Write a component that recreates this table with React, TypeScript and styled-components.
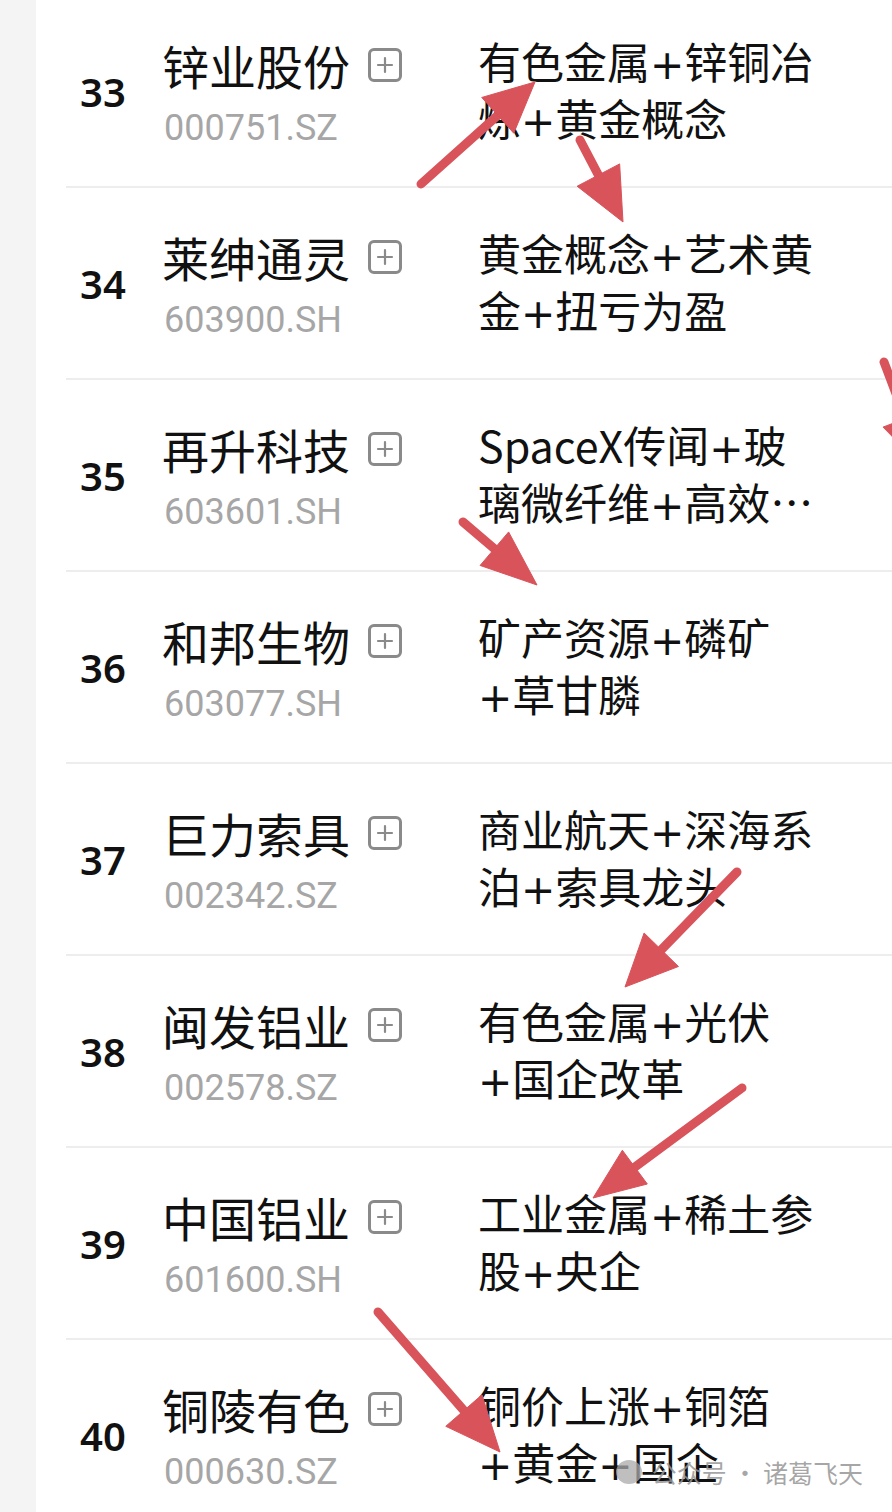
import styled, { createGlobalStyle } from "styled-components";

const GlobalStyle = createGlobalStyle`
  html, body {
    margin: 0;
    padding: 0;
    background: #ffffff;
    overflow: hidden;
  }
`;

const Page = styled.div`
  position: relative;
  display: flex;
  height: 100vh;
  overflow: hidden;
  background: #ffffff;
`;

const Rail = styled.div`
  width: 36px;
  flex-shrink: 0;
  background: #f4f4f4;
`;

const List = styled.div`
  flex: 1;
  margin-top: -4px;
  padding-left: 30px;
`;

const Row = styled.div`
  display: flex;
  height: 190px;
  border-bottom: 2px solid #ededed;
`;

const Rank = styled.div`
  width: 98px;
  padding-left: 14px;
  box-sizing: border-box;
  display: flex;
  align-items: center;
  font-family: "Noto Sans", "DejaVu Sans", sans-serif;
  font-weight: 600;
  font-size: 40px;
  color: #111111;
`;

const NameBlock = styled.div`
  width: 314px;
  padding-top: 39px;
  box-sizing: border-box;
  display: flex;
  flex-direction: column;
`;

const NameLine = styled.div`
  display: flex;
  align-items: center;
  gap: 18px;
  height: 60px;
`;

const Name = styled.span`
  font-family: "Noto Sans CJK SC", sans-serif;
  font-size: 47px;
  line-height: 60px;
  color: #111111;
  margin-left: -2px;
`;

const AddBox = styled.span`
  display: inline-flex;
  width: 34px;
  height: 34px;
  box-sizing: border-box;
  border: 3px solid #8a8a8a;
  border-radius: 6px;
  align-items: center;
  justify-content: center;
`;

const Code = styled.div`
  margin-top: 9px;
  font-family: Roboto, "Liberation Sans", sans-serif;
  font-size: 36px;
  line-height: 48px;
  color: #a6a6a6;
`;

const Concept = styled.div`
  padding-top: 36px;
  font-family: "Noto Sans CJK SC", sans-serif;
  font-size: 43px;
  color: #111111;
`;

const ConceptLine = styled.div`
  height: 57px;
  line-height: 57px;
  white-space: nowrap;
`;

const Plus = styled.span`
  font-family: "DejaVu Sans", sans-serif;
  font-weight: 400;
  font-size: 41px;
  line-height: 0;
`;

const Overlay = styled.svg`
  position: absolute;
  top: 0;
  left: 0;
  pointer-events: none;
`;

const Watermark = styled.div`
  position: absolute;
  right: 29px;
  bottom: 22px;
  display: flex;
  align-items: center;
  gap: 10px;
  font-family: "Noto Sans CJK SC", sans-serif;
  font-size: 25px;
  color: rgba(150, 150, 150, 0.85);
  pointer-events: none;
`;

const WatermarkDot = styled.span`
  width: 26px;
  height: 24px;
  border-radius: 50%;
  background: rgba(170, 170, 170, 0.75);
`;

type Stock = { rank: number; name: string; code: string; concept: string[] };

const stocks: Stock[] = [
  { rank: 33, name: "锌业股份", code: "000751.SZ", concept: ["有色金属+锌铜冶", "炼+黄金概念"] },
  { rank: 34, name: "莱绅通灵", code: "603900.SH", concept: ["黄金概念+艺术黄", "金+扭亏为盈"] },
  { rank: 35, name: "再升科技", code: "603601.SH", concept: ["SpaceX传闻+玻", "璃微纤维+高效…"] },
  { rank: 36, name: "和邦生物", code: "603077.SH", concept: ["矿产资源+磷矿", "+草甘膦"] },
  { rank: 37, name: "巨力索具", code: "002342.SZ", concept: ["商业航天+深海系", "泊+索具龙头"] },
  { rank: 38, name: "闽发铝业", code: "002578.SZ", concept: ["有色金属+光伏", "+国企改革"] },
  { rank: 39, name: "中国铝业", code: "601600.SH", concept: ["工业金属+稀土参", "股+央企"] },
  { rank: 40, name: "铜陵有色", code: "000630.SZ", concept: ["铜价上涨+铜箔", "+黄金+国企"] },
];

type Pt = [number, number];

// annotation arrows drawn over the screenshot
const arrows: { from: Pt; to: Pt; head: number; half: number }[] = [
  { from: [421, 184], to: [535, 82], head: 50, half: 24 },
  { from: [580, 140], to: [623, 222], head: 53, half: 24 },
  { from: [884, 362], to: [925, 470], head: 55, half: 24 },
  { from: [463, 522], to: [537, 585], head: 56, half: 22 },
  { from: [737, 872], to: [625, 987], head: 52, half: 24 },
  { from: [742, 1088], to: [593, 1198], head: 52, half: 21 },
  { from: [378, 1312], to: [500, 1452], head: 55, half: 24 },
];

function Arrow({ from, to, head, half }: { from: Pt; to: Pt; head: number; half: number }) {
  const dx = to[0] - from[0];
  const dy = to[1] - from[1];
  const len = Math.hypot(dx, dy);
  const ux = dx / len;
  const uy = dy / len;
  const bx = to[0] - ux * head;
  const by = to[1] - uy * head;
  const px = -uy;
  const py = ux;
  return (
    <g fill="#d9535b" stroke="#d9535b">
      <line
        x1={from[0]}
        y1={from[1]}
        x2={bx + ux * 6}
        y2={by + uy * 6}
        strokeWidth={9}
        strokeLinecap="round"
      />
      <polygon
        strokeWidth={1}
        strokeLinejoin="round"
        points={`${to[0]},${to[1]} ${bx + px * half},${by + py * half} ${bx - px * half},${by - py * half}`}
      />
    </g>
  );
}

function PlusIcon() {
  return (
    <svg width="18" height="18" viewBox="0 0 18 18">
      <path d="M9 2v14M2 9h14" stroke="#8a8a8a" strokeWidth="2.2" strokeLinecap="round" />
    </svg>
  );
}

// split on "+" so the plus signs get their own, wider glyph
function renderLine(line: string) {
  const parts = line.split("+");
  return parts.map((p, i) => (
    <span key={i}>
      {i > 0 && <Plus>+</Plus>}
      {p}
    </span>
  ));
}

function App() {
  return (
    <Page>
      <GlobalStyle />
      <Rail />
      <List>
        {stocks.map((s) => (
          <Row key={s.rank}>
            <Rank>{s.rank}</Rank>
            <NameBlock>
              <NameLine>
                <Name>{s.name}</Name>
                <AddBox>
                  <PlusIcon />
                </AddBox>
              </NameLine>
              <Code>{s.code}</Code>
            </NameBlock>
            <Concept>
              {s.concept.map((line, i) => (
                <ConceptLine key={i}>{renderLine(line)}</ConceptLine>
              ))}
            </Concept>
          </Row>
        ))}
      </List>
      <Overlay width="892" height="1512" viewBox="0 0 892 1512">
        {arrows.map((a, i) => (
          <Arrow key={i} {...a} />
        ))}
      </Overlay>
      <Watermark>
        <WatermarkDot />
        <span>公众号 · 诸葛飞天</span>
      </Watermark>
    </Page>
  );
}

export default App;
